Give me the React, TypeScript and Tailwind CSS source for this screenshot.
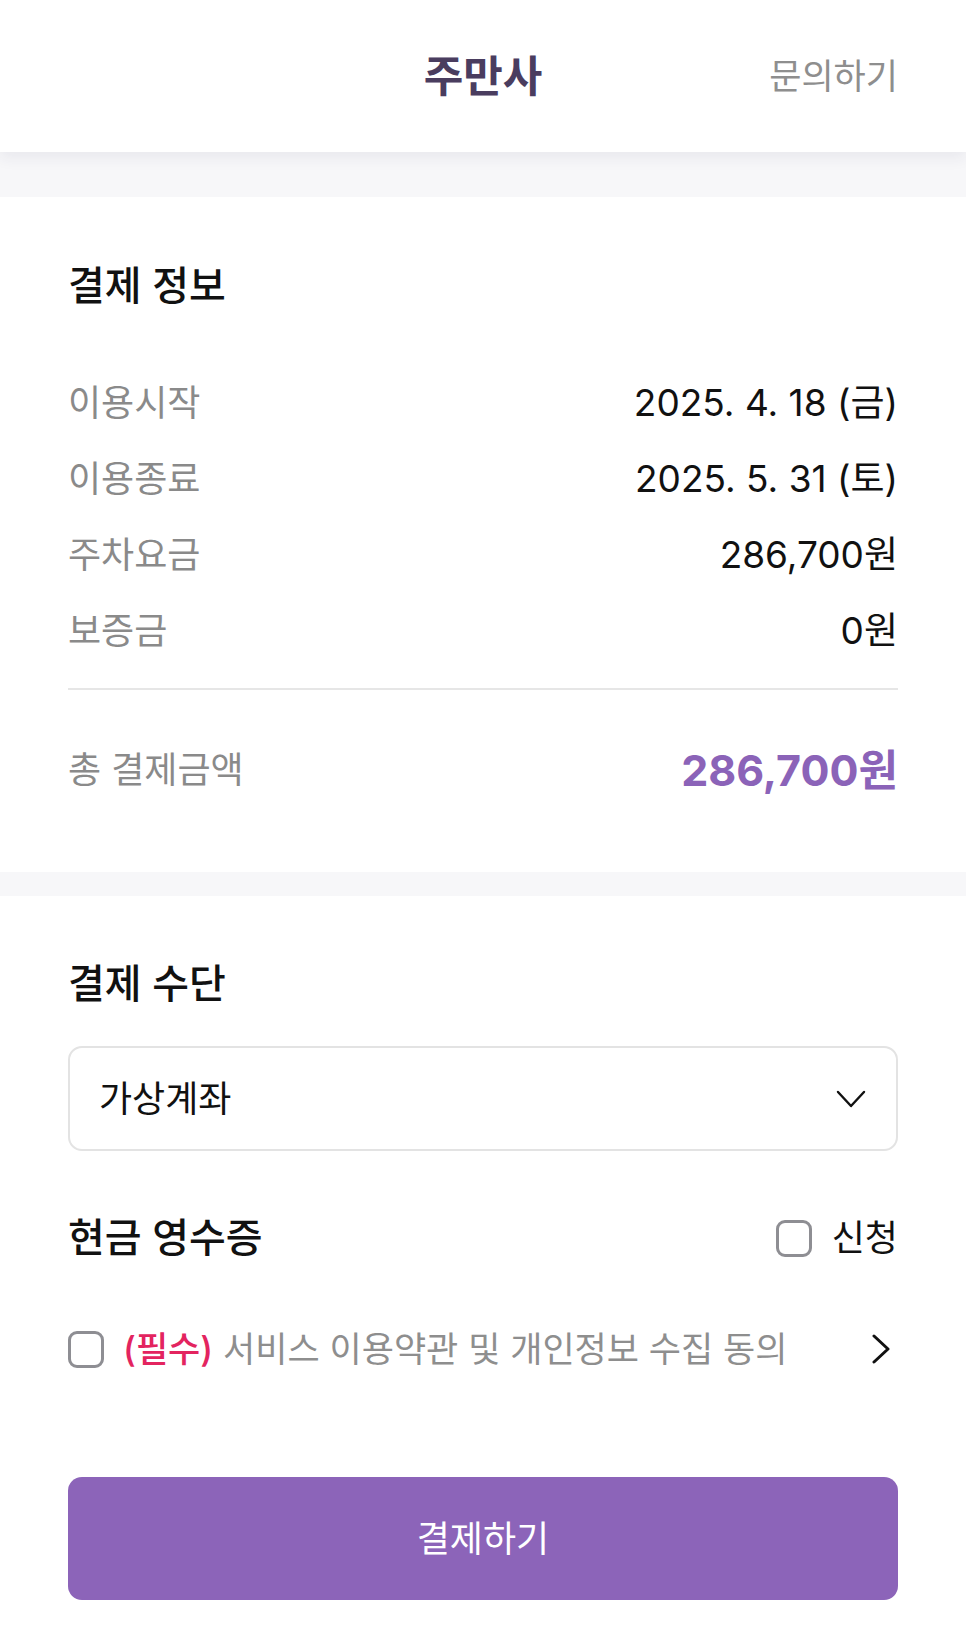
import React from "react";

const Row = ({ label, value }: { label: string; value: string }) => (
  <div className="flex h-[76px] items-center justify-between">
    <span className="text-[36px] text-[#8a8a8a]">{label}</span>
    <span className="text-[37px] text-[#111111]">{value}</span>
  </div>
);

const Checkbox = () => (
  <div className="h-[37px] w-[36px] shrink-0 rounded-[9px] border-[3px] border-[#8e8e93] bg-white" />
);

export default function App() {
  return (
    <div className="min-h-[1646px] w-full bg-white font-['Inter','Noto_Sans_CJK_KR',sans-serif] text-[#111111]">
      <header className="relative z-10 grid h-[152px] grid-cols-[1fr_auto_1fr] items-center bg-white px-[68px] shadow-[0_6px_14px_rgba(40,40,80,0.07)]">
        <div />
        <h1 className="text-[43px] font-bold text-[#4a3d5f]">주만사</h1>
        <div className="text-right text-[35px] text-[#8e8e8e]">문의하기</div>
      </header>
      <div className="h-[45px] bg-[#f7f7f9]" />

      <section className="bg-white px-[68px] pb-[64px] pt-[66px]">
        <h2 className="text-[40px] font-medium leading-[46px]">결제 정보</h2>
        <div className="mt-[56px]">
          <Row label="이용시작" value="2025. 4. 18 (금)" />
          <Row label="이용종료" value="2025. 5. 31 (토)" />
          <Row label="주차요금" value="286,700원" />
          <Row label="보증금" value="0원" />
        </div>
        <div className="mt-[19px] h-[2px] bg-[#e6e6e6]" />
        <div className="mt-[42px] flex h-[76px] items-center justify-between">
          <span className="text-[36px] text-[#8a8a8a]">총 결제금액</span>
          <span className="text-[43px] font-bold text-[#8b63b8]">286,700원</span>
        </div>
      </section>
      <div className="h-[24px] bg-[#f7f7f9]" />

      <section className="bg-white px-[68px] pt-[65px]">
        <h2 className="text-[40px] font-medium leading-[46px]">결제 수단</h2>
        <div className="mt-[39px] flex h-[105px] items-center justify-between rounded-[14px] border-2 border-[#e3e3e3] pl-[29px] pr-[30px]">
          <span className="text-[36px]">가상계좌</span>
          <svg width="30" height="20" viewBox="0 0 30 20" fill="none">
            <path d="M2 3 L15 17 L28 3" stroke="#111" strokeWidth="2.4" strokeLinecap="round" strokeLinejoin="round" />
          </svg>
        </div>

        <div className="mt-[57px] flex h-[60px] items-center justify-between">
          <span className="text-[40px] font-medium">현금 영수증</span>
          <div className="flex items-center gap-[20px]">
            <Checkbox />
            <span className="text-[36px]">신청</span>
          </div>
        </div>

        <div className="mt-[51px] flex h-[60px] items-center justify-between">
          <div className="flex items-center gap-[19px]">
            <Checkbox />
            <span className="text-[35px] text-[#8e8e8e]">
              <span className="font-medium text-[#e3245f]">(필수)</span> 서비스 이용약관 및 개인정보 수집 동의
            </span>
          </div>
          <svg width="22" height="30" viewBox="0 0 22 30" fill="none" className="mr-[6px]">
            <path d="M4 2 L18 15 L4 28" stroke="#111" strokeWidth="3" strokeLinecap="round" strokeLinejoin="round" />
          </svg>
        </div>

        <button className="mb-[47px] mt-[98px] flex h-[123px] w-full items-center justify-center rounded-[14px] bg-[#8c64b9] text-[36px] text-white">
          결제하기
        </button>
      </section>
    </div>
  );
}
